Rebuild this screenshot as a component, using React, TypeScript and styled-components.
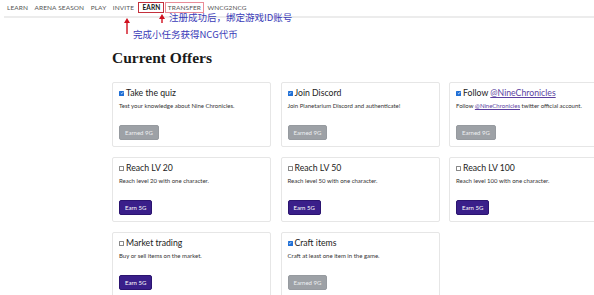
import React from "react";
import styled, { createGlobalStyle, css } from "styled-components";

const GlobalStyle = createGlobalStyle`
  html, body { margin: 0; padding: 0; overflow: hidden; background: #fff; }
  body { font-family: Lato, "Noto Sans", "Liberation Sans", sans-serif; color: #222; }
  * { box-sizing: border-box; }
`;

const Page = styled.div`
  position: relative;
  width: 640px;
  height: 295px;
`;

const NavBar = styled.nav`
  display: flex;
  align-items: center;
  height: 18px;
  margin-left: 4px;
  padding: 0 0 2px 0;
  border-bottom: 2px solid #ececec;
`;

const NavItem = styled.span<{ $box?: "strong" | "light"; $active?: boolean }>`
  font-size: 6.5px;
  line-height: 9px;
  text-transform: uppercase;
  letter-spacing: 0.1px;
  color: ${(p) => (p.$active ? "#111" : "#555")};
  font-weight: ${(p) => (p.$active ? 700 : 400)};
  padding: 0 2px;
  margin-right: 0.5px;
  border: 1px solid transparent;
  ${(p) =>
    p.$box === "strong" &&
    css`
      border-color: #c4303c;
      padding: 0 3px 0 4px;
    `}
  ${(p) =>
    p.$box === "light" &&
    css`
      border-color: #e98d98;
    `}
`;

const Note = styled.span<{ $x: number; $y: number }>`
  position: absolute;
  left: ${(p) => p.$x}px;
  top: ${(p) => p.$y}px;
  font-family: "Noto Sans CJK SC", "Noto Sans", sans-serif;
  font-size: 9.5px;
  line-height: 11px;
  color: #3a3bb8;
  white-space: nowrap;
`;

const Arrow = styled.svg<{ $x: number; $y: number }>`
  position: absolute;
  left: ${(p) => p.$x}px;
  top: ${(p) => p.$y}px;
`;

const Main = styled.main`
  padding-left: 112px;
`;

const Heading = styled.h2`
  margin: 31px 0 15px 0;
  font-family: "Liberation Serif", "DejaVu Serif", serif;
  font-weight: 700;
  font-size: 15.5px;
  line-height: 18px;
  color: #1a1a1a;
`;

const Grid = styled.div`
  display: grid;
  grid-template-columns: repeat(3, 159px);
  column-gap: 9.5px;
  row-gap: 10px;
`;

const Card = styled.div`
  border: 1px solid #e6e6e6;
  border-radius: 2px;
  padding: 4px 6px 6px 6px;
  height: 65px;
  background: #fff;
`;

const TitleRow = styled.div`
  display: flex;
  align-items: center;
  font-size: 8.7px;
  line-height: 12px;
  color: #222;
`;

const Box = styled.span<{ $checked?: boolean }>`
  display: inline-flex;
  align-items: center;
  justify-content: center;
  width: 5px;
  height: 5px;
  margin-right: 2px;
  border-radius: 0.5px;
  ${(p) =>
    p.$checked
      ? css`
          background: #1f6fd6;
        `
      : css`
          border: 0.8px solid #888;
          background: #fff;
        `}
`;

const Link = styled.a`
  color: #5b3f9f;
  text-decoration: underline;
`;

const Desc = styled.p`
  margin: 3px 0 15px 0;
  font-size: 6px;
  line-height: 8px;
  color: #333;
`;

const Button = styled.button<{ $done?: boolean }>`
  display: block;
  height: 15px;
  padding: 0 5px;
  font-family: Lato, "Noto Sans", sans-serif;
  font-size: 6px;
  line-height: 13px;
  border-radius: 2px;
  color: #fff;
  cursor: pointer;
  ${(p) =>
    p.$done
      ? css`
          background: #9da1a6;
          border: 1px solid #969a9f;
          color: #eef0f2;
        `
      : css`
          background: #3a1f8a;
          border: 1px solid #2b1470;
        `}
`;

type Offer = {
  title: React.ReactNode;
  desc: React.ReactNode;
  done: boolean;
};

const offers: Offer[] = [
  { title: "Take the quiz", desc: "Test your knowledge about Nine Chronicles.", done: true },
  { title: "Join Discord", desc: "Join Planetarium Discord and authenticate!", done: true },
  {
    title: (
      <>
        Follow&nbsp;<Link>@NineChronicles</Link>
      </>
    ),
    desc: (
      <>
        Follow <Link>@NineChronicles</Link> twitter official account.
      </>
    ),
    done: true,
  },
  { title: "Reach LV 20", desc: "Reach level 20 with one character.", done: false },
  { title: "Reach LV 50", desc: "Reach level 50 with one character.", done: false },
  { title: "Reach LV 100", desc: "Reach level 100 with one character.", done: false },
  { title: "Market trading", desc: "Buy or sell items on the market.", done: false },
  { title: "Craft items", desc: "Craft at least one item in the game.", done: true },
];

const Check = () => (
  <svg width="4" height="4" viewBox="0 0 10 10">
    <path d="M2 5.2 L4.2 7.3 L8 2.8" fill="none" stroke="#fff" strokeWidth="1.8" />
  </svg>
);

export default function App() {
  return (
    <>
      <GlobalStyle />
      <Page>
        <NavBar>
          <NavItem>Learn</NavItem>
          <NavItem>Arena Season</NavItem>
          <NavItem>Play</NavItem>
          <NavItem>Invite</NavItem>
          <NavItem $box="strong" $active>
            Earn
          </NavItem>
          <NavItem $box="light">Transfer</NavItem>
          <NavItem>WNCG2NCG</NavItem>
        </NavBar>

        <Arrow $x={123} $y={17} width="8" height="18" viewBox="0 0 8 18">
          <polygon points="4,1 7,6 1,6" fill="#d0101e" />
          <rect x="3.3" y="5" width="1.4" height="12" fill="#d0101e" />
        </Arrow>
        <Arrow $x={158} $y={13} width="8" height="11" viewBox="0 0 8 11">
          <polygon points="4,1 7,6 1,6" fill="#d0101e" />
          <rect x="3.3" y="5" width="1.4" height="5" fill="#d0101e" />
        </Arrow>
        <Note $x={169} $y={12}>注册成功后，绑定游戏ID账号</Note>
        <Note $x={133} $y={29}>完成小任务获得NCG代币</Note>

        <Main>
          <Heading>Current Offers</Heading>
          <Grid>
            {offers.map((o, i) => (
              <Card key={i}>
                <TitleRow>
                  <Box $checked={o.done}>{o.done && <Check />}</Box>
                  {o.title}
                </TitleRow>
                <Desc>{o.desc}</Desc>
                <Button $done={o.done}>{o.done ? "Earned 9G" : "Earn 5G"}</Button>
              </Card>
            ))}
          </Grid>
        </Main>
      </Page>
    </>
  );
}
